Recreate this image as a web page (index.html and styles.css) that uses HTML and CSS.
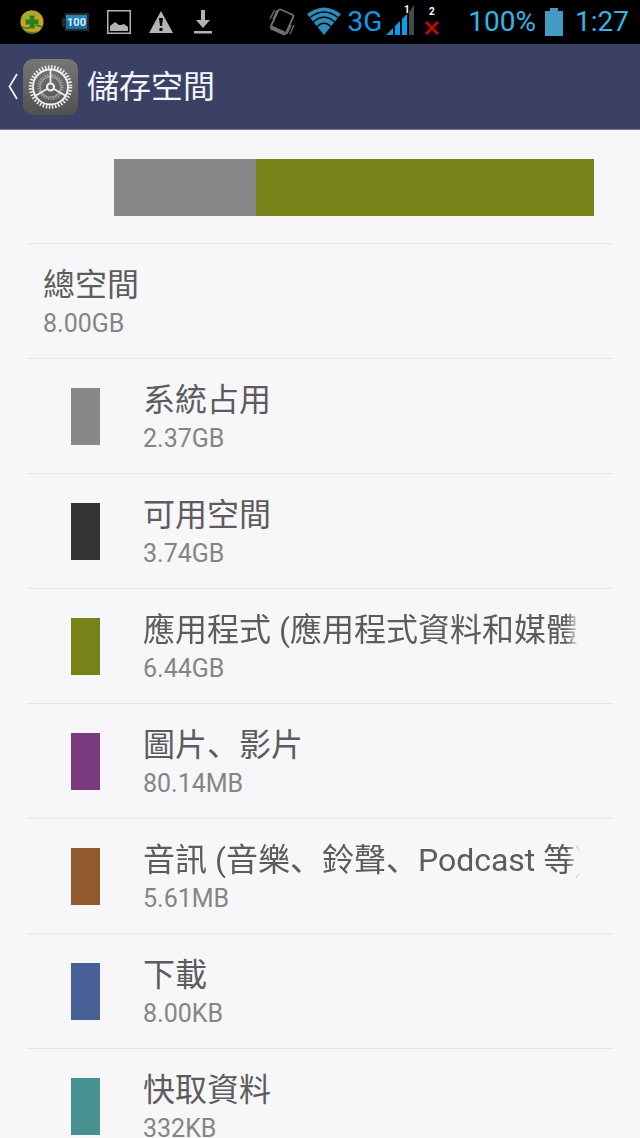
FILE: index.html
```html
<!DOCTYPE html>
<html lang="zh">
<head>
<meta charset="utf-8">
<meta name="viewport" content="width=device-width, initial-scale=1">
<title>儲存空間</title>
<link rel="stylesheet" href="styles.css">
</head>
<body>
<div class="screen">
  <div class="status">
    <div class="notices">
      <svg width="24" height="24" viewBox="0 0 24 24" aria-hidden="true">
        <circle cx="12" cy="12" r="11.500" fill="#cfa21e"/>
        <path d="M1 9C2 3 8-1 14 1c4 1 7 4 8 6-6-2-10-1-13 2-3 2-6 2-8 0z" fill="#a9ab25"/>
        <path d="M1 15c3 3 7 3 11 1 4-2 7-2 10 0-3 5-7 8-11 7.500C6 23 2 20 1 15z" fill="#398020"/>
        <path d="M3 18c4 2 7 1 10-1 3-1 6-1 8 1-2 3-5 4-8 4-5 0-8-1-10-4z" fill="#c9a524"/>
        <path d="M9.500 5.500h5v4h4v5h-4v4h-5v-4h-4v-5h4z" fill="#2e7d22" stroke="#71982a"/>
      </svg>
      <svg width="27" height="18" viewBox="0 0 27 18" aria-hidden="true">
        <path d="M3 0h24v18H3v-4H0V5h3z" fill="#25292c"/>
        <rect x="4" y="2" width="21" height="14" fill="#1570a3"/>
        <path d="M4 2h21v5H4z" fill="#2586b7"/>
        <text class="mini" x="14.500" y="13" text-anchor="middle">100</text>
      </svg>
      <svg width="24" height="24" viewBox="0 0 24 24" aria-hidden="true">
        <rect x=".75" y=".75" width="22.500" height="22.500" fill="none" stroke="#b3b3b3" stroke-width="1.500"/>
        <path d="M3 21v-5l5-4 4 3h2l3-1 4 3v4z" fill="#b3b3b3"/>
      </svg>
      <svg width="24" height="22" viewBox="0 0 24 22" aria-hidden="true">
        <path fill-rule="evenodd" d="M12 0l12 22H0zM10 7l1 8h2l1-8zM10.500 17v3h3v-3z" fill="#b3b3b3"/>
      </svg>
      <svg class="download" width="18" height="24" viewBox="0 0 18 24" aria-hidden="true">
        <path d="M7 0h4v10h5l-7 8-7-8h5zM0 21h18v2.500H0z" fill="#b3b3b3"/>
      </svg>
    </div>
    <div class="signals">
      <svg width="26" height="30" viewBox="0 0 26 30" fill="none" stroke="#707070" aria-hidden="true">
        <path d="M11.500 2.500L23 7.500Q25 8.500 24 10.500L17 26Q16 28 14 27L3 22Q1 21 2 19L9 4Q10 2 11.500 2.500z" stroke-width="1.800"/>
        <path d="M2.500 20.500L15.500 26.500" stroke-width="4"/>
        <path d="M1 12L5.500 3M4 12L8 3M18 27L22 18M21 27L25 18" stroke-width="1.300"/>
      </svg>
      <svg class="wifi" width="34" height="28" viewBox="0 0 36 28" preserveAspectRatio="none" aria-hidden="true">
        <path d="M0 7Q18-6 36 7L18 28z" fill="#2b8cb8"/>
        <path d="M2.500 11Q18-1 33.500 11M6 15.500Q18 5 30 15.500M10 20.500Q18 12 26 20.500" fill="none" stroke="#000" stroke-width="1.300"/>
      </svg>
      <span class="network">3G</span>
      <svg class="bars" width="29" height="30" viewBox="0 0 29 30" aria-hidden="true">
        <path d="M0 30L7 23v7zM9 30v-9l5-5v14zM16 30V14l5-5v21z" fill="#0c9ce8"/>
        <path d="M23 30V7l5-7v30z" fill="#484848"/>
        <text class="sim" x="18" y="8">1</text>
      </svg>
      <svg class="no-sim" width="16" height="28" viewBox="0 0 16 28" aria-hidden="true">
        <text class="sim" x="5" y="8">2</text>
        <path d="M2 15l12 12M14 15L2 27" stroke="#b90b0b" stroke-width="3"/>
      </svg>
      <span>100%</span>
      <svg class="battery" width="18" height="28" viewBox="0 0 18 28" aria-hidden="true"><path d="M5 0h8v3h5v25H0V3h5z" fill="#439bc2"/></svg>
      <time>1:27</time>
    </div>
  </div>

  <header class="bar">
    <button class="back" type="button" aria-label="返回">
      <svg width="10" height="27" viewBox="0 0 10 27" aria-hidden="true"><path d="M9 1L1.500 13.500 9 26" fill="none" stroke="#f0f0f4" stroke-width="1.800"/></svg>
      <svg width="55" height="56" viewBox="0 0 55 56" fill="none" aria-hidden="true">
        <defs><linearGradient id="plate" x2="0" y2="1"><stop stop-color="#777"/><stop offset="1" stop-color="#505050"/></linearGradient></defs>
        <rect width="55" height="56" rx="10" fill="url(#plate)"/>
        <circle cx="27.500" cy="28" r="20" stroke="#eee" stroke-width="3.500" stroke-dasharray="1.500 1.640"/>
        <circle cx="27.500" cy="28" r="17.500" stroke="#eee" stroke-width="2"/>
        <circle cx="27.500" cy="28" r="12" stroke="#a0a0a0" stroke-width="2.500" stroke-dasharray="1.200 1.310"/>
        <circle cx="27.500" cy="28" r="10.300" stroke="#999" stroke-width="1.500"/>
        <path d="M27.500 24V10M31 30l12 7M24 30l-12 7" stroke="#eee" stroke-width="1.800"/>
        <circle cx="27.500" cy="28" r="3.500" stroke="#eee" stroke-width="2.200"/>
      </svg>
    </button>
    <h1 class="heading">儲存空間</h1>
  </header>

  <main class="content">
    <div class="usage">
      <div class="chart" role="img" aria-label="儲存空間">
        <div class="system" style="width: 29.6%"></div>
        <div class="apps"></div>
      </div>
    </div>
    <ul class="list" lang="zh-Hans">
      <li class="row total"><div class="text"><div class="title">總空間</div><div class="size">8.00GB</div></div></li>
      <li class="row"><span class="swatch system"></span><div class="text"><div class="title">系統占用</div><div class="size">2.37GB</div></div></li>
      <li class="row"><span class="swatch free"></span><div class="text"><div class="title">可用空間</div><div class="size">3.74GB</div></div></li>
      <li class="row"><span class="swatch apps"></span><div class="text"><div class="title fade">應用程式 (應用程式資料和媒體</div><div class="size">6.44GB</div></div></li>
      <li class="row"><span class="swatch images"></span><div class="text"><div class="title">圖片、影片</div><div class="size">80.14MB</div></div></li>
      <li class="row"><span class="swatch audio"></span><div class="text"><div class="title fade">音訊 (音樂、鈴聲、Podcast 等)</div><div class="size">5.61MB</div></div></li>
      <li class="row"><span class="swatch downloads"></span><div class="text"><div class="title">下載</div><div class="size">8.00KB</div></div></li>
      <li class="row"><span class="swatch cache"></span><div class="text"><div class="title">快取資料</div><div class="size">332KB</div></div></li>
    </ul>
  </main>
</div>
</body>
</html>
```
FILE: styles.css
```css
* { box-sizing: border-box; }

body {
  margin: 0;
  background: #f7f7fa;
  color: #5c5c5c;
  font-family: Roboto, "Noto Sans CJK SC", sans-serif;
}

svg { display: block; flex: none; }

.screen {
  display: flex;
  flex-direction: column;
  height: 100vh;
  overflow: hidden;
}

.status {
  display: flex;
  flex: none;
  justify-content: space-between;
  align-items: center;
  height: 44px;
  padding: 0 11px 0 20px;
  background: #000;
  color: #33b5e5;
  font-size: 28px;
  line-height: 44px;
}

.notices, .signals { display: flex; align-items: center; }
.notices { gap: 18px; }
.download { margin-left: 3px; }
.wifi { margin: 0 6px 2px 12px; }
.network { color: #0c9ce8; }
.bars { margin: 0 9px 4px 4px; }
.no-sim { margin: 0 28px 2px 0; }
.battery { margin: 0 12px 0 9px; }
.mini { fill: #d8eef8; font-size: 11px; font-weight: 700; }
.sim { fill: #fff; font-size: 10px; font-weight: 700; }

.bar {
  display: flex;
  flex: none;
  align-items: center;
  height: 86px;
  padding-left: 8px;
  background: #3a4165;
  border-bottom: 1px solid #71779a;
}

.back {
  display: flex;
  align-items: center;
  gap: 5px;
  padding: 0;
  border: 0;
  background: none;
}

.heading {
  margin: 0 0 0 9px;
  color: #f4f4f8;
  font-size: 32px;
  font-weight: 400;
  line-height: 46px;
}

.content { flex: 1; min-height: 0; overflow: hidden; padding: 0 28px; }
.usage { padding: 29px 18px 27px 86px; }
.chart { display: flex; height: 57px; }
.chart .apps { flex: 1; }

.list { margin: 0; padding: 0; list-style: none; }

.row {
  display: flex;
  align-items: center;
  gap: 43px;
  padding: 18px 32px 18px 43px;
  border-top: 1px solid #e5e5e8;
}

.total { padding-left: 15px; }
.swatch { flex: none; width: 29px; height: 57px; }
.text { flex: 1; min-width: 0; }

.title {
  overflow: hidden;
  font-size: 32px;
  line-height: 46px;
  white-space: nowrap;
}

.fade {
  -webkit-mask-image: linear-gradient(to left, transparent, #000 14px);
  mask-image: linear-gradient(to left, transparent, #000 14px);
}

.size { color: #858585; font-size: 25px; line-height: 32px; }

.system { background: #888; }
.free { background: #333; }
.apps { background: #778219; }
.images { background: #7b3a80; }
.audio { background: #905a2e; }
.downloads { background: #476196; }
.cache { background: #479290; }
```
